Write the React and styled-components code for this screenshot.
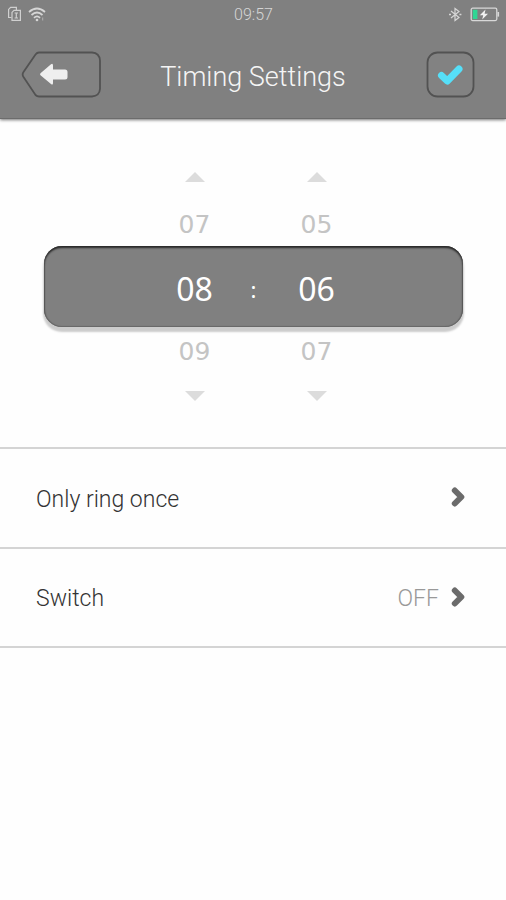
import React, { useState } from 'react';
import styled, { createGlobalStyle } from 'styled-components';

const GlobalStyle = createGlobalStyle`
  * {
    box-sizing: border-box;
  }

  body {
    margin: 0;
    background: #fefefe;
    font-family: Roboto, 'Liberation Sans', sans-serif;
  }

  button {
    margin: 0;
    padding: 0;
    border: none;
    background: none;
    color: inherit;
    font: inherit;
    cursor: pointer;
  }

  svg {
    display: block;
  }
`;

const Header = styled.header`
  background: #808080;
  border-bottom: 1px solid #6c6c6c;
  box-shadow: 0 1px 3px rgba(0, 0, 0, 0.55);
`;

const StatusBar = styled.div`
  display: grid;
  grid-template-columns: 1fr auto 1fr;
  align-items: center;
  height: 28px;
  padding: 0 6px 0 7px;
  color: #d6d6d6;
  font-size: 16px;
  font-weight: 300;
`;

const StatusIcons = styled.div`
  display: flex;
  align-items: center;
  justify-content: ${(props) => (props.$end ? 'flex-end' : 'flex-start')};
  gap: ${(props) => (props.$end ? '8px' : '6px')};
`;

const NavBar = styled.div`
  display: grid;
  grid-template-columns: 1fr auto 1fr;
  align-items: center;
  padding: 23px 31px 20px 21px;
`;

const NavButton = styled.button`
  justify-self: ${(props) => (props.$end ? 'end' : 'start')};
`;

const Title = styled.h1`
  margin: 0 0 0 10px;
  padding-top: 4px;
  color: #f5f5f5;
  font-size: 27px;
  font-weight: 300;
  line-height: 32px;
`;

const Picker = styled.section`
  padding: 35px 43px 28px 44px;
  border-bottom: 2px solid #d4d4d4;
`;

const PickerRow = styled.div`
  display: grid;
  grid-template-columns: 100px 22px 100px;
  justify-content: center;
  align-items: center;
  padding-left: 4px;
`;

const ArrowButton = styled.button`
  display: flex;
  justify-content: center;
  padding: 18px 0;
  grid-column: ${(props) => props.$column};
`;

const Neighbour = styled.button`
  height: 46px;
  padding-top: 4px;
  grid-column: ${(props) => props.$column};
  color: #c4c4c4;
  font-family: 'DejaVu Sans', sans-serif;
  font-size: 25px;
  line-height: 40px;
`;

const Selected = styled(PickerRow)`
  height: 81px;
  padding-top: 4px;
  border-radius: 18px;
  background: #808080;
  color: #fff;
  font-family: 'Noto Sans', sans-serif;
  font-size: 32px;
  line-height: 40px;
  text-align: center;
  box-shadow:
    inset 0 2px 2px #2a2a2a,
    inset 0 0 1px 1px #666,
    0 4px 2px 1px #ccc;
`;

const Colon = styled.span`
  padding-right: 4px;
  font-size: 22px;
`;

const Row = styled.button`
  display: flex;
  align-items: center;
  width: 100%;
  height: ${(props) => (props.$last ? '99px' : '100px')};
  padding: 2px 40px 0 36px;
  border-bottom: 2px solid #d4d4d4;
  color: #333;
  font-size: 23px;
  font-weight: 300;
  text-align: left;
`;

const RowLabel = styled.span`
  flex: 1;
`;

const RowValue = styled.span`
  margin-right: 12px;
  color: #999;
`;

const SimIcon = () => (
  <svg width="15" height="16" viewBox="0 0 15 16" fill="none" stroke="#d0d0d0" strokeWidth="1.2">
    <path d="M4.5 11.5H1.6V3.4L3.6 1.4H9.4V4" />
    <path d="M5 6.3L7 4.3H13.4V14.3H5Z" />
    <path d="M7.6 7h3.400M9.300 7v5M7.6 12h3.400" strokeWidth="1.2" />
  </svg>
);

const WifiIcon = () => (
  <svg width="18" height="15" viewBox="0 0 18 15" fill="none" stroke="#d6d6d6" strokeWidth="1.7">
    <path d="M1 5Q9-2 17 5" />
    <path d="M3.5 8Q9 3 14.5 8" />
    <path d="M6 10.8Q9 8 12 10.8" />
    <circle cx="9" cy="13" r="1.3" fill="#d6d6d6" stroke="none" />
    <path d="M14.7 10.5v3" strokeWidth="1" stroke="#b0b0b0" />
  </svg>
);

const BluetoothIcon = () => (
  <svg width="14" height="15" viewBox="0 0 14 15" fill="none" stroke="#d6d6d6" strokeWidth="1.2">
    <path d="M3 4L11 10.5L7 13.5V1.5L11 4.5L3 11" />
    <path d="M1 7.5h2M11.4 7.5h2" strokeWidth="1.6" />
  </svg>
);

const BatteryIcon = () => (
  <svg width="30" height="15" viewBox="0 0 30 15">
    <rect x="1.2" y="1.2" width="25.6" height="12.4" rx="1.5" fill="none" stroke="#d8d8d8" strokeWidth="1.3" />
    <rect x="2.8" y="2.8" width="4.6" height="9.2" fill="#2fd694" />
    <path d="M27.5 5h1.6v4.6h-1.6z" fill="#d8d8d8" />
    <path d="M15.5 2.5L9.8 8.3H13.2L12.2 12.5L18 6.8H14.6Z" fill="#f2f2f2" />
  </svg>
);

const BackIcon = () => (
  <svg width="80" height="47" viewBox="0 0 80 47">
    <path
      d="M18 1.5H71Q78.500 2 79 9.500V38Q78.500 45 71 45.500H18Q16 45.500 14.500 44L2.500 26Q0.800 23.500 2.500 21L14.500 3.500Q16 1.500 18 1.500Z"
      fill="#828282"
      stroke="#525252"
      strokeWidth="1.8"
    />
    <path
      d="M19.500 22.200L30 13.200Q32 12 32 14.500V18.500H44Q46.500 18.500 46.500 21V26Q46.500 28.500 44 28.500H32V32Q32 34.500 30 33L19.500 24.200Q18.500 23.200 19.500 22.200Z"
      fill="#efefef"
    />
  </svg>
);

const CheckIcon = () => (
  <svg width="49" height="47" viewBox="0 0 49 47">
    <rect x="1.500" y="1.500" width="46" height="44" rx="10" fill="#828282" stroke="#525252" strokeWidth="1.800" />
    <path
      d="M15.500 24.500L21.300 30L33 18"
      fill="none"
      stroke="#56dff8"
      strokeWidth="7"
      strokeLinecap="round"
      strokeLinejoin="round"
    />
  </svg>
);

const Triangle = ({ down }) => (
  <svg width="20" height="10" viewBox="0 0 20 10">
    <path d={down ? 'M0 0H20L10 10Z' : 'M0 10H20L10 0Z'} fill="#dcdcdc" />
  </svg>
);

const Chevron = () => (
  <svg width="15" height="24" viewBox="0 0 15 24">
    <path
      d="M3.800 3.500L10.300 10L3.800 16.500"
      fill="none"
      stroke="#6b6b6b"
      strokeWidth="6"
      strokeLinecap="round"
      strokeLinejoin="round"
    />
  </svg>
);

const pad = (value) => String(value).padStart(2, '0');
const wrap = (value, size) => (value + size) % size;

const App = () => {
  const [hour, setHour] = useState(8);
  const [minute, setMinute] = useState(6);
  const [on, setOn] = useState(false);

  const moveHour = (step) => setHour(wrap(hour + step, 24));
  const moveMinute = (step) => setMinute(wrap(minute + step, 60));

  return (
    <>
      <GlobalStyle />
      <Header>
        <StatusBar>
          <StatusIcons>
            <SimIcon />
            <WifiIcon />
          </StatusIcons>
          <span>09:57</span>
          <StatusIcons $end>
            <BluetoothIcon />
            <BatteryIcon />
          </StatusIcons>
        </StatusBar>
        <NavBar>
          <NavButton type="button" aria-label="Back">
            <BackIcon />
          </NavButton>
          <Title>Timing Settings</Title>
          <NavButton type="button" aria-label="Save" $end>
            <CheckIcon />
          </NavButton>
        </NavBar>
      </Header>
      <main>
        <Picker>
          <PickerRow>
            <ArrowButton $column={1} aria-label="Previous hour" onClick={() => moveHour(-1)}>
              <Triangle />
            </ArrowButton>
            <ArrowButton $column={3} aria-label="Previous minute" onClick={() => moveMinute(-1)}>
              <Triangle />
            </ArrowButton>
          </PickerRow>
          <PickerRow>
            <Neighbour $column={1} onClick={() => moveHour(-1)}>{pad(wrap(hour - 1, 24))}</Neighbour>
            <Neighbour $column={3} onClick={() => moveMinute(-1)}>{pad(wrap(minute - 1, 60))}</Neighbour>
          </PickerRow>
          <Selected>
            <span>{pad(hour)}</span>
            <Colon>:</Colon>
            <span>{pad(minute)}</span>
          </Selected>
          <PickerRow>
            <Neighbour $column={1} onClick={() => moveHour(1)}>{pad(wrap(hour + 1, 24))}</Neighbour>
            <Neighbour $column={3} onClick={() => moveMinute(1)}>{pad(wrap(minute + 1, 60))}</Neighbour>
          </PickerRow>
          <PickerRow>
            <ArrowButton $column={1} aria-label="Next hour" onClick={() => moveHour(1)}>
              <Triangle down />
            </ArrowButton>
            <ArrowButton $column={3} aria-label="Next minute" onClick={() => moveMinute(1)}>
              <Triangle down />
            </ArrowButton>
          </PickerRow>
        </Picker>
        <Row type="button">
          <RowLabel>Only ring once</RowLabel>
          <Chevron />
        </Row>
        <Row type="button" $last onClick={() => setOn(!on)}>
          <RowLabel>Switch</RowLabel>
          <RowValue>{on ? 'ON' : 'OFF'}</RowValue>
          <Chevron />
        </Row>
      </main>
    </>
  );
};

export default App;
